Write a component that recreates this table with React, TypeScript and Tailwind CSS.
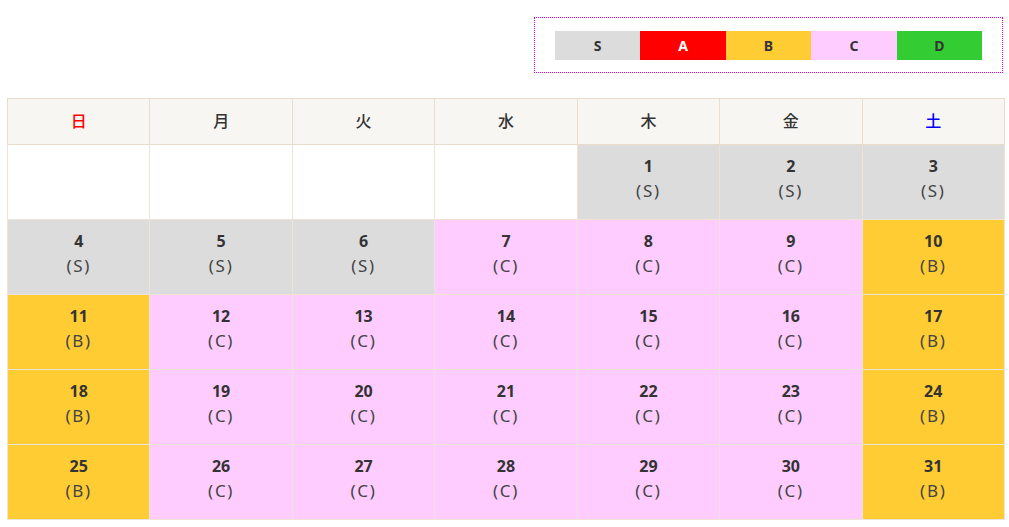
import React from "react";

type Grade = "S" | "A" | "B" | "C" | "D";

const bg: Record<Grade, string> = {
  S: "bg-[#dcdcdc]",
  A: "bg-[#ff0000]",
  B: "bg-[#ffcc33]",
  C: "bg-[#ffccff]",
  D: "bg-[#33cc33]",
};

const grades: string =
  "SSS" + "SSSCCCB" + "BCCCCCB" + "BCCCCCB" + "BCCCCCB";

const days = ["日", "月", "火", "水", "木", "金", "土"];

export default function App() {
  const cells: ({ d: number; g: Grade } | null)[] = [null, null, null, null];
  for (let i = 1; i <= 31; i++) cells.push({ d: i, g: grades[i - 1] as Grade });
  const rows: (typeof cells)[] = [];
  for (let i = 0; i < cells.length; i += 7) rows.push(cells.slice(i, i + 7));

  return (
    <div
      className="w-[1009px] bg-white text-[#333]"
      style={{ fontFamily: '"Noto Sans", "Open Sans", "Noto Sans CJK JP", sans-serif' }}
    >
      <div className="flex justify-end pt-[17px] pr-[6px]">
        <div className="w-[469px] h-[56px] border border-dotted border-[#dd00dd] pt-[13px] pl-[20px]">
          <div className="flex w-[427px] h-[29px]">
            {(["S", "A", "B", "C", "D"] as Grade[]).map((g) => (
              <div
                key={g}
                className={`flex-1 flex items-center justify-center text-[14px] font-bold ${bg[g]} ${
                  g === "A" ? "text-white" : "text-[#333]"
                }`}
              >
                {g}
              </div>
            ))}
          </div>
        </div>
      </div>
      <div className="pl-[7px] mt-[25px]">
        <table className="w-[998px] table-fixed border-collapse">
          <thead>
            <tr>
              {days.map((d, i) => (
                <th
                  key={d}
                  className={`h-[46px] pb-[3px] bg-[#f8f6f3] border border-[#e8dccd] text-[16px] font-medium ${
                    i === 0 ? "text-[#ff0000]" : i === 6 ? "text-[#0000ff]" : "text-[#333]"
                  }`}
                  style={{ fontFamily: '"Noto Sans CJK JP", sans-serif' }}
                >
                  {d}
                </th>
              ))}
            </tr>
          </thead>
          <tbody>
            {rows.map((r, ri) => (
              <tr key={ri}>
                {r.map((c, ci) => (
                  <td
                    key={ci}
                    className={`h-[75px] p-0 align-top text-center border border-[#ede3d8] ${
                      c ? bg[c.g] : "bg-white"
                    }`}
                  >
                    {c && (
                      <div className="pt-[11px]">
                        <div className="text-[16px] leading-[20px] font-bold text-[#333]">{c.d}</div>
                        <div className="mt-[5px] text-[17px] leading-[20px] tracking-[0.1em] text-[#444]">
                          ({c.g})
                        </div>
                      </div>
                    )}
                  </td>
                ))}
              </tr>
            ))}
          </tbody>
        </table>
      </div>
    </div>
  );
}
